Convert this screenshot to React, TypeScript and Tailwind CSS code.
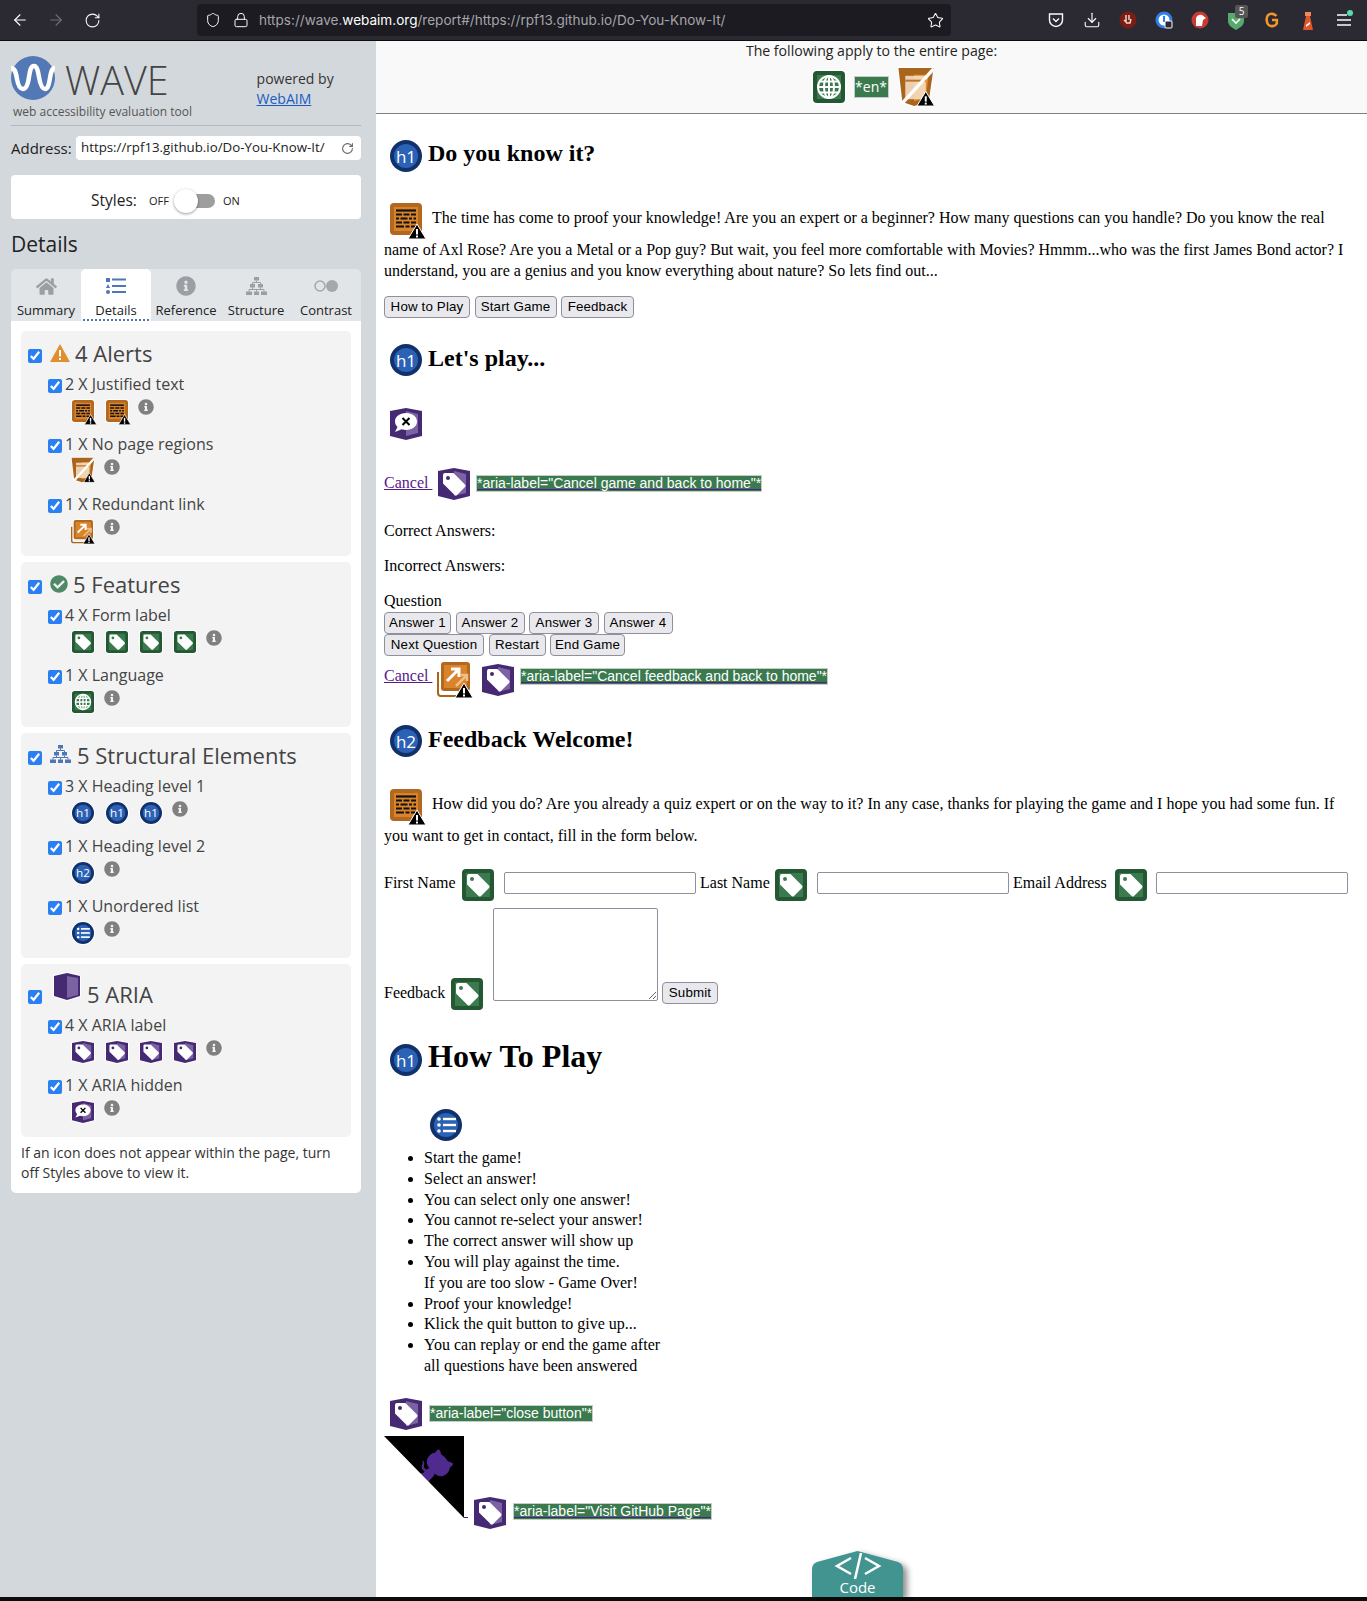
import React from "react";
import { ArrowLeft, ArrowRight, RotateCw, Shield, Lock, Star, Download } from "lucide-react";
import { FaHome, FaInfoCircle, FaCheckCircle } from "react-icons/fa";

type IconProps = { size?: number };

function WarnBadge() {
  return (
    <g>
      <polygon points="18,36 27,21 36,36" fill="#000" stroke="#fff" strokeWidth="1" />
      <rect x="26" y="26" width="2" height="5.500" fill="#fff" />
      <rect x="26" y="32.500" width="2" height="2" fill="#fff" />
    </g>
  );
}

function BrickIcon({ size = 32 }: IconProps) {
  return (
    <svg width={size} height={size} viewBox="0 0 32 32" className="overflow-visible shrink-0">
      <rect x="0" y="0" width="32" height="32" rx="4" fill="#b2681f" stroke="#fff" strokeWidth="3" paintOrder="stroke" />
      <rect x="4" y="4" width="24" height="24" fill="#d9832b" />
      <g stroke="#111" strokeWidth="2.200">
        <path d="M6 7.500H26" />
        <path d="M6 11.500H26" strokeDasharray="6 1.500" />
        <path d="M6 15.500H26" strokeDasharray="3 1.500 7 1.500" />
        <path d="M6 19.500H26" strokeDasharray="6 1.500" />
        <path d="M6 23.500H26" strokeDasharray="8 1.500 4 1.500" />
      </g>
      <WarnBadge />
    </svg>
  );
}

function RegionIcon({ size = 40 }: IconProps) {
  return (
    <svg width={size} height={size} viewBox="0 0 40 41" className="overflow-visible shrink-0">
      <polygon points="2,1 38,1 33,36 18,40 6,36" fill="#a9651c" stroke="#fff" strokeWidth="2.500" paintOrder="stroke" />
      <polygon points="18,8 33,8 30,32 18,35" fill="#e48e33" />
      <rect x="9" y="9" width="21" height="24" fill="#f3dcc0" opacity="0.9" />
      <rect x="9" y="13" width="21" height="2" fill="#b9752b" />
      <path d="M6 37L38 2" stroke="#fff" strokeWidth="3.500" />
      <g transform="translate(3 4)">
        <WarnBadge />
      </g>
    </svg>
  );
}

function LinkIcon({ size = 36 }: IconProps) {
  return (
    <svg width={size} height={size} viewBox="0 0 36 36" className="overflow-visible shrink-0">
      <path d="M1 10V31a3 3 0 0 0 3 3H26" fill="none" stroke="#a9651c" strokeWidth="2" />
      <rect x="4" y="0" width="29" height="29" rx="3" fill="#b2681f" stroke="#fff" strokeWidth="2" paintOrder="stroke" />
      <rect x="7" y="3" width="23" height="23" fill="#d9832b" />
      <path d="M10 19L21 8M14 7H22V15" fill="none" stroke="#fff" strokeWidth="3" />
      <path d="M19 24L29 14M24 13H30V19" fill="none" stroke="#f0bd86" strokeWidth="2.500" />
      <WarnBadge />
    </svg>
  );
}

function TagShape({ hole }: { hole: string }) {
  return (
    <g>
      <path d="M5 7q0-2 2-2h8.500l11.500 11.500q1.200 1.200 0 2.400l-8 8q-1.200 1.200-2.400 0L5 15.500Z" fill="#fff" />
      <circle cx="10" cy="10" r="2" fill={hole} />
    </g>
  );
}

function GreenTile({ children, size = 32 }: IconProps & { children: React.ReactNode }) {
  return (
    <svg width={size} height={size} viewBox="0 0 32 32" className="overflow-visible shrink-0">
      <rect x="0" y="0" width="32" height="32" rx="4" fill="#235832" stroke="#fff" strokeWidth="3" paintOrder="stroke" />
      <rect x="4" y="4" width="24" height="24" fill="#3a7a4e" />
      {children}
    </svg>
  );
}

function TagIcon({ size = 32 }: IconProps) {
  return (
    <GreenTile size={size}>
      <TagShape hole="#3a7a4e" />
    </GreenTile>
  );
}

function GlobeIcon({ size = 32 }: IconProps) {
  return (
    <GreenTile size={size}>
      <g fill="none" stroke="#fff" strokeWidth="2">
        <circle cx="16" cy="16" r="11" />
        <ellipse cx="16" cy="16" rx="5" ry="11" />
        <path d="M16 5V27M5 16H27M6.500 10.500H25.500M6.500 21.500H25.500" />
      </g>
    </GreenTile>
  );
}

function PurpleShield({ children, size = 32 }: IconProps & { children: React.ReactNode }) {
  return (
    <svg width={size} height={size} viewBox="0 0 32 32" className="overflow-visible shrink-0">
      <polygon points="0,3 16,0 32,3 32,28 16,32 0,28" fill="#452a73" stroke="#fff" strokeWidth="3" paintOrder="stroke" />
      <polygon points="16,3 28,6 28,25 16,28" fill="#7b62a3" />
      {children}
    </svg>
  );
}

function AriaTagIcon({ size = 32 }: IconProps) {
  return (
    <PurpleShield size={size}>
      <TagShape hole="#452a73" />
    </PurpleShield>
  );
}

function AriaHiddenIcon({ size = 32 }: IconProps) {
  return (
    <PurpleShield size={size}>
      <path d="M16 5c6.500 0 11 3.600 11 8.500S22.500 22 16 22c-1.600 0-3-.2-4.300-.7L5 24l2.500-5C6 17.600 5 15.700 5 13.500 5 8.600 9.500 5 16 5Z" fill="#fff" />
      <path d="M12.500 10l7 7M19.500 10l-7 7" stroke="#000" strokeWidth="2" />
    </PurpleShield>
  );
}

function HeadingIcon({ label, size = 32 }: IconProps & { label: string }) {
  return (
    <svg width={size} height={size} viewBox="0 0 32 32" className="overflow-visible shrink-0">
      <circle cx="16" cy="16" r="16" fill="#11316b" stroke="#fff" strokeWidth="3" paintOrder="stroke" />
      <circle cx="16" cy="16" r="12" fill="#2b62b6" />
      <text x="16" y="22.500" textAnchor="middle" fontSize="17" fill="#fff" fontFamily="'Open Sans', sans-serif">
        {label}
      </text>
    </svg>
  );
}

function ListIcon({ size = 32 }: IconProps) {
  return (
    <svg width={size} height={size} viewBox="0 0 32 32" className="overflow-visible shrink-0">
      <circle cx="16" cy="16" r="16" fill="#11316b" stroke="#fff" strokeWidth="3" paintOrder="stroke" />
      <circle cx="16" cy="16" r="12" fill="#2b62b6" />
      <g fill="#fff">
        <circle cx="9" cy="10" r="1.800" />
        <circle cx="9" cy="16" r="1.800" />
        <circle cx="9" cy="22" r="1.800" />
        <rect x="13" y="8.800" width="13" height="2.400" />
        <rect x="13" y="14.800" width="13" height="2.400" />
        <rect x="13" y="20.800" width="13" height="2.400" />
      </g>
    </svg>
  );
}

function WaveLogo() {
  return (
    <svg width="44" height="44" viewBox="0 0 44 44" className="shrink-0">
      <circle cx="22" cy="22" r="22" fill="#5279b6" />
      <path d="M0 12c4 0 5 5 6 11s3 10 6 10 5-5 6-12 2-11 5-11 4 5 5 11 3 12 6 12 4-5 5-11 2-10 5-10" fill="none" stroke="#fff" strokeWidth="4.500" />
    </svg>
  );
}

function AlertsIcon() {
  return (
    <svg width="20" height="18" viewBox="0 0 20 18" className="shrink-0">
      <polygon points="10,0 20,18 0,18" fill="#e08f2d" />
      <rect x="9" y="6" width="2" height="6.500" fill="#fff" />
      <rect x="9" y="14" width="2" height="2" fill="#fff" />
    </svg>
  );
}

function AriaBookIcon() {
  return (
    <svg width="28" height="28" viewBox="0 0 28 28" className="overflow-visible shrink-0">
      <polygon points="1,3 14,0 27,3 27,23 14,27 1,23" fill="#452a73" stroke="#fff" strokeWidth="2" paintOrder="stroke" />
      <polygon points="14,3 25,5 25,22 14,25" fill="#7b62a3" />
    </svg>
  );
}

function TreeIcon({ color }: { color: string }) {
  return (
    <svg width="21" height="18" viewBox="0 0 21 18" fill={color}>
      <rect x="8" y="0" width="5" height="3.500" />
      <rect x="4" y="7" width="5" height="3.500" />
      <rect x="12" y="7" width="5" height="3.500" />
      <rect x="0" y="14.500" width="6" height="3.500" />
      <rect x="8" y="14.500" width="5" height="3.500" />
      <rect x="15" y="14.500" width="6" height="3.500" />
      <path d="M10.500 3.500V5.500M6.500 5.500H14.500M6.500 5.500V7M14.500 5.500V7M3 12.500H18M3 12.500V14.500M10.500 12.500V14.500M18 12.500V14.500M6.500 10.500V12.500M14.500 10.500V12.500" stroke={color} strokeWidth="1" fill="none" />
    </svg>
  );
}

function DetailsTabIcon() {
  return (
    <svg width="20" height="18" viewBox="0 0 20 18" fill="#4f76b5">
      <rect x="0" y="1" width="4" height="4" />
      <polygon points="2,7 4,11 0,11" />
      <circle cx="2" cy="15" r="2" />
      <rect x="6" y="1.500" width="14" height="2" />
      <rect x="6" y="8" width="14" height="2" />
      <rect x="6" y="14" width="14" height="2" />
    </svg>
  );
}

function ContrastTabIcon() {
  return (
    <svg width="26" height="14" viewBox="0 0 26 14">
      <circle cx="7" cy="7" r="5" fill="none" stroke="#a4a8ac" strokeWidth="1.500" />
      <circle cx="19" cy="7" r="6" fill="#a4a8ac" />
    </svg>
  );
}

function Check({ className = "" }: { className?: string }) {
  return <input type="checkbox" defaultChecked className={`w-[14px] h-[14px] m-0 shrink-0 accent-[#2a7ff3] ${className}`} />;
}

function Info() {
  return <FaInfoCircle size={16} className="text-[#808080] -ml-[2px] -mt-[1px] shrink-0" />;
}

function DetailRow({ title, icons }: { title: string; icons: React.ReactNode }) {
  return (
    <div className="h-[60px] pl-[27px]">
      <div className="flex items-center h-[14px]">
        <Check />
        <span className="ml-[3px] text-[16px] leading-[14px] -mt-[4px] text-[#444]">{title}</span>
      </div>
      <div className="flex items-start gap-[12px] pl-[24px] mt-[7px]">
        {icons}
        <Info />
      </div>
    </div>
  );
}

function DetailSection({ icon, title, tall, children }: { icon: React.ReactNode; title: string; tall?: boolean; children: React.ReactNode }) {
  return (
    <div className={`bg-[#f3f3f3] rounded-[5px] ${tall ? "pt-[26px]" : "pt-[18px]"}`}>
      <div className="flex items-start pl-[7px] h-[30px]">
        <Check />
        {icon}
        <span className="text-[22px] leading-[30px] -mt-[11px] text-[#444] whitespace-nowrap">{title}</span>
      </div>
      <div className="-mb-[3px]">{children}</div>
    </div>
  );
}

function Tab({ icon, label, active }: { icon: React.ReactNode; label: string; active?: boolean }) {
  return (
    <div className={`h-[52px] flex flex-col items-center rounded-t-[5px] ${active ? "bg-white" : ""}`}>
      <div className="h-[18px] mt-[8px] flex items-center">{icon}</div>
      <span className={`mt-[6px] text-[13px] leading-[18px] text-[#222] text-center self-stretch mx-[2px] ${active ? "border-b-2 border-dotted border-[#4f76b5]" : ""}`}>
        {label}
      </span>
    </div>
  );
}

function Sidebar() {
  return (
    <aside className="w-[376px] shrink-0 bg-[#d3d8dc] font-['Open_Sans',sans-serif] pl-[11px] pr-[15px] text-[#222]">
      <div className="flex mt-[15px] h-[44px]">
        <WaveLogo />
        <span className="ml-[10px] mt-[2px] text-[39.500px] leading-[44px] font-light text-[#444]">WAVE</span>
        <div className="ml-[88px] mt-[13px] text-[14px] leading-[20px] text-[#333]">
          <div>powered by</div>
          <a className="text-[#1a5bc4] underline">WebAIM</a>
        </div>
      </div>
      <div className="mt-[3px] ml-[2px] text-[12px] leading-[18px] text-[#555]">web accessibility evaluation tool</div>
      <div className="mt-[4px] h-px bg-[#b4b8bc]" />
      <div className="flex items-center mt-[10px] h-[24px]">
        <span className="text-[15px] w-[65px]">Address:</span>
        <div className="flex-1 h-[24px] bg-white rounded-[4px] flex items-center justify-between pl-[5px] pr-[7px]">
          <span className="text-[13.300px] text-[#222] whitespace-nowrap">https://rpf13.github.io/Do-You-Know-It/</span>
          <RotateCw size={13} className="text-[#666]" />
        </div>
      </div>
      <div className="mt-[15px] h-[44px] bg-white rounded-[4px] flex items-center pl-[80px] pt-[8px]">
        <span className="text-[15.500px] w-[58px]">Styles:</span>
        <span className="text-[11px] w-[26px]">OFF</span>
        <div className="w-[40px] h-[14px] rounded-full bg-[#9e9e9e] relative">
          <div className="absolute -left-[1px] -top-[5px] w-[24px] h-[24px] rounded-full bg-white shadow-[0_1px_3px_rgba(0,0,0,0.4)]" />
        </div>
        <span className="text-[11px] ml-[8px]">ON</span>
      </div>
      <div className="mt-[11px] text-[21px] leading-[28px] text-[#222]">Details</div>
      <div className="mt-[11px] grid grid-cols-5 bg-[#e2e5e8] rounded-t-[5px]">
        <Tab icon={<FaHome size={21} className="text-[#9b9fa3]" />} label="Summary" />
        <Tab icon={<DetailsTabIcon />} label="Details" active />
        <Tab icon={<FaInfoCircle size={20} className="text-[#9b9fa3]" />} label="Reference" />
        <Tab icon={<TreeIcon color="#9b9fa3" />} label="Structure" />
        <Tab icon={<ContrastTabIcon />} label="Contrast" />
      </div>
      <div className="bg-white rounded-b-[5px] px-[10px] pt-[10px] pb-[10px] flex flex-col gap-[6px]">
        <DetailSection icon={<span className="ml-[8px] -mt-[5px] mr-[5px]"><AlertsIcon /></span>} title="4 Alerts">
          <DetailRow title="2 X Justified text" icons={<><BrickIcon size={22} /><BrickIcon size={22} /></>} />
          <DetailRow title="1 X No page regions" icons={<span className="-ml-[2px] -mr-[2px] -mt-[3px]"><RegionIcon size={26} /></span>} />
          <DetailRow title="1 X Redundant link" icons={<span className="-ml-[1px] -mr-[1px]"><LinkIcon size={24} /></span>} />
        </DetailSection>
        <DetailSection icon={<span className="ml-[8px] -mt-[5px] mr-[5px]"><FaCheckCircle size={18} className="text-[#4f8a68]" /></span>} title="5 Features">
          <DetailRow title="4 X Form label" icons={<><TagIcon size={22} /><TagIcon size={22} /><TagIcon size={22} /><TagIcon size={22} /></>} />
          <DetailRow title="1 X Language" icons={<GlobeIcon size={22} />} />
        </DetailSection>
        <DetailSection icon={<span className="ml-[8px] -mt-[6px] mr-[6px]"><TreeIcon color="#4f76b5" /></span>} title="5 Structural Elements">
          <DetailRow title="3 X Heading level 1" icons={<><HeadingIcon label="h1" size={22} /><HeadingIcon label="h1" size={22} /><HeadingIcon label="h1" size={22} /></>} />
          <DetailRow title="1 X Heading level 2" icons={<HeadingIcon label="h2" size={22} />} />
          <DetailRow title="1 X Unordered list" icons={<ListIcon size={22} />} />
        </DetailSection>
        <DetailSection tall icon={<span className="ml-[11px] -mt-[17px] mr-[6px]"><AriaBookIcon /></span>} title="5 ARIA">
          <DetailRow title="4 X ARIA label" icons={<><AriaTagIcon size={22} /><AriaTagIcon size={22} /><AriaTagIcon size={22} /><AriaTagIcon size={22} /></>} />
          <DetailRow title="1 X ARIA hidden" icons={<AriaHiddenIcon size={22} />} />
        </DetailSection>
        <p className="text-[14px] leading-[20px] text-[#333]">
          If an icon does not appear within the page, turn off Styles above to view it.
        </p>
      </div>
    </aside>
  );
}

function AriaText({ children, link }: { children: React.ReactNode; link?: boolean }) {
  return (
    <span className={`inline-block bg-[#3a7a4e] border border-[#c4cdc6] text-white text-[14px] leading-[15px] h-[17px] font-['Liberation_Sans',sans-serif] whitespace-nowrap ${link ? "underline decoration-[#551a8b]" : ""}`}>
      {children}
    </span>
  );
}

function Btn({ children, width }: { children: React.ReactNode; width: string }) {
  return (
    <button className={`h-[22px] bg-[#e9e9ed] border border-[#8f8f9d] rounded-[4px] text-[13.330px] tracking-[0.15px] leading-[18px] text-black font-['Liberation_Sans',sans-serif] whitespace-nowrap shrink-0 ${width}`}>
      {children}
    </button>
  );
}

function HeadingRow({ label, text, big, low, className = "" }: { label: string; text: string; big?: boolean; low?: boolean; className?: string }) {
  return (
    <div className={`flex items-start pl-[6px] gap-[6px] h-[32px] ${className}`}>
      <HeadingIcon label={label} />
      <span className={`font-bold whitespace-nowrap ${low ? "leading-[28px]" : big ? "leading-[24px]" : "leading-[26px]"} ${big ? "text-[32px]" : "text-[24px]"}`}>{text}</span>
    </div>
  );
}

function Field() {
  return <input className="block h-[22px] mt-[3px] w-[192px] bg-white border border-[#8f8f9d] rounded-[2px]" />;
}

function GithubCorner() {
  return (
    <svg width="80" height="82" viewBox="0 0 250 250" preserveAspectRatio="none" className="shrink-0 mb-[11px]">
      <path d="M0,0 L115,115 L130,115 L142,142 L250,250 L250,0 Z" fill="#000" />
      <path d="M128.3,109 C113.800,99.700 119,89.600 119,89.600 C122,82.700 120.500,78.600 120.500,78.600 C119.200,72 123.400,76.300 123.400,76.300 C127.300,80.900 125.500,87.300 125.500,87.300 C122.900,97.600 130.600,101.900 134.400,103.200" fill="#4f2a8f" />
      <path d="M115,115 C114.900,115.100 118.700,116.500 119.800,115.400 L133.700,101.600 C136.900,99.200 139.900,98.400 142.200,98.600 C133.800,88 127.500,74.400 143.800,58 C148.500,53.400 154,51.200 159.700,51 C160.300,49.400 163.200,43.600 171.400,40.100 C171.400,40.100 176.100,42.500 178.800,56.200 C183.100,58.600 187.200,61.800 190.900,65.400 C194.500,69 197.700,73.200 200.100,77.600 C213.800,80.200 216.300,84.900 216.300,84.900 C212.700,93.100 206.900,96 205.400,96.600 C205.100,102.400 203,107.800 198.300,112.500 C181.900,128.900 168.300,122.500 157.700,114.100 C157.900,116.900 156.700,120.900 152.700,124.900 L141,136.500 C139.800,137.700 141.600,141.900 141.800,141.800 Z" fill="#4f2a8f" />
    </svg>
  );
}

function MainContent() {
  return (
    <main className="flex-1 relative font-['Liberation_Serif',serif] text-[16px] text-black bg-white">
      <div className="h-[73px] bg-[#f9f9f9] border-b border-[#808080] font-['Open_Sans',sans-serif]">
        <div className="text-center text-[14.100px] leading-[20px] text-[#222]">The following apply to the entire page:</div>
        <div className="flex justify-center items-center gap-[9px] mt-[5px] ml-[5px] h-[41px]">
          <GlobeIcon size={32} />
          <span className="inline-flex items-center justify-center h-[22px] w-[35px] bg-[#3a7a4e] border border-[#c4cdc6] text-white text-[14px]">*en*</span>
          <span className="-ml-[2px]"><RegionIcon size={40} /></span>
        </div>
      </div>

      <div className="px-[8px]">
        <HeadingRow label="h1" text="Do you know it?" className="mt-[26px]" />
        <p className="mt-[31px] leading-[21px]">
          <span className="inline-block ml-[6px] mr-[10px] mb-[4px] align-[-16px]"><BrickIcon /></span>
          The time has come to proof your knowledge! Are you an expert or a beginner? How many questions can you handle? Do you know the real name of Axl Rose? Are you a Metal or a Pop guy? But wait, you feel more comfortable with Movies? Hmmm...who was the first James Bond actor? I understand, you are a genius and you know everything about nature? So lets find out...
        </p>
        <div className="flex gap-[4.500px] mt-[15px]">
          <Btn width="w-[86px]">How to Play</Btn>
          <Btn width="w-[82px]">Start Game</Btn>
          <Btn width="w-[73px]">Feedback</Btn>
        </div>
        <HeadingRow label="h1" text="Let's play..." low className="mt-[26px]" />
        <div className="mt-[32px] pl-[6px]"><AriaHiddenIcon /></div>
        <div className="mt-[28px] flex items-center h-[32px]">
          <a className="text-[#551a8b] underline whitespace-pre w-[44px] -mt-[3px]">Cancel </a>
          <span className="ml-[10px]"><AriaTagIcon /></span>
          <span className="ml-[6px] -mt-[2px]"><AriaText link>*aria-label="Cancel game and back to home"*</AriaText></span>
        </div>
        <div className="mt-[20px] leading-[21px]">Correct Answers:</div>
        <div className="mt-[14px] leading-[21px]">Incorrect Answers:</div>
        <div className="mt-[14px] leading-[21px]">Question</div>
        <div className="flex gap-[4.500px] mt-[1px]">
          <Btn width="w-[67px]">Answer 1</Btn>
          <Btn width="w-[69px]">Answer 2</Btn>
          <Btn width="w-[70px]">Answer 3</Btn>
          <Btn width="w-[69px]">Answer 4</Btn>
        </div>
        <div className="flex gap-[4.500px]">
          <Btn width="w-[100px]">Next Question</Btn>
          <Btn width="w-[57px]">Restart</Btn>
          <Btn width="w-[75px]">End Game</Btn>
        </div>
        <div className="mt-[6px] flex items-center h-[35px]">
          <a className="text-[#551a8b] underline whitespace-pre w-[44px] -mt-[8px]">Cancel </a>
          <span className="ml-[9px]"><LinkIcon /></span>
          <span className="ml-[9px]"><AriaTagIcon /></span>
          <span className="ml-[6px] -mt-[8px]"><AriaText link>*aria-label="Cancel feedback and back to home"*</AriaText></span>
        </div>
        <HeadingRow label="h2" text="Feedback Welcome!" low className="mt-[28px]" />
        <p className="mt-[32px] leading-[21px]">
          <span className="inline-block ml-[6px] mr-[10px] mb-[4px] align-[-16px]"><BrickIcon /></span>
          How did you do? Are you already a quiz expert or on the way to it? In any case, thanks for playing the game and I hope you had some fun. If you want to get in contact, fill in the form below.
        </p>
        <div className="mt-[23px] flex items-start h-[32px]">
          <span className="mt-[3px] leading-[21px] w-[71px] whitespace-nowrap shrink-0">First Name</span>
          <span className="ml-[7px]"><TagIcon /></span>
          <span className="ml-[10px]"><Field /></span>
          <span className="ml-[4px] mt-[3px] leading-[21px] w-[69px] whitespace-nowrap shrink-0">Last Name</span>
          <span className="ml-[6px]"><TagIcon /></span>
          <span className="ml-[10px]"><Field /></span>
          <span className="ml-[4px] mt-[3px] leading-[21px] w-[95px] whitespace-nowrap shrink-0">Email Address</span>
          <span className="ml-[7px]"><TagIcon /></span>
          <span className="ml-[9px]"><Field /></span>
        </div>
        <div className="mt-[7px] flex items-end h-[102px]">
          <span className="mb-[7px] leading-[21px] w-[61px]">Feedback</span>
          <span className="ml-[6px] h-[32px]"><TagIcon /></span>
          <textarea className="ml-[10px] mb-[9px] w-[165px] h-[93px] bg-white border border-[#8f8f9d] rounded-[2px] resize" />
          <span className="ml-[4px] mb-[6px]"><Btn width="w-[56px]">Submit</Btn></span>
        </div>
        <HeadingRow label="h1" text="How To Play" big className="mt-[34px]" />
        <div className="mt-[33px] ml-[46px]"><ListIcon /></div>
        <ul className="mt-[7px] pl-[40px] list-disc leading-[20.800px]">
          <li>Start the game!</li>
          <li>Select an answer!</li>
          <li>You can select only one answer!</li>
          <li>You cannot re-select your answer!</li>
          <li>The correct answer will show up</li>
          <li>You will play against the time.<br />If you are too slow - Game Over!</li>
          <li>Proof your knowledge!</li>
          <li>Klick the quit button to give up...</li>
          <li>You can replay or end the game after<br />all questions have been answered</li>
        </ul>
        <div className="mt-[21px] flex items-center pl-[6px] h-[32px]">
          <AriaTagIcon />
          <span className="ml-[7px] -mt-[1px]"><AriaText>*aria-label="close button"*</AriaText></span>
        </div>
        <div className="mt-[6px] flex items-end">
          <GithubCorner />
          <span className="w-[4px] h-px bg-[#551a8b] mb-[11px] shrink-0" />
          <span className="ml-[6px]"><AriaTagIcon /></span>
          <span className="ml-[7px] mb-[9px] flex"><AriaText link>*aria-label="Visit GitHub Page"*</AriaText></span>
        </div>
      </div>

      <div className="absolute left-[436px] top-[1510px] w-[91px] h-[46px] font-['Open_Sans',sans-serif] text-white flex flex-col items-center">
        <svg width="91" height="46" viewBox="0 0 91 46" className="absolute inset-0 overflow-visible drop-shadow-[4px_3px_3px_rgba(0,0,0,0.45)]">
          <path d="M0 46V18q0-5 5-7L45.500 0 86 11q5 2 5 7V46Z" fill="#429490" />
        </svg>
        <svg width="48" height="26" viewBox="0 0 48 26" fill="none" stroke="#fff" strokeWidth="2.500" className="relative mt-[2px]">
          <path d="M17 5L3 13L17 21M27 0L21 26M31 5L45 13L31 21" />
        </svg>
        <div className="relative text-[15px] leading-[16px]">Code</div>
      </div>
    </main>
  );
}

function ExtDot({ color, children }: { color: string; children?: React.ReactNode }) {
  return (
    <svg width="18" height="18" viewBox="0 0 18 18">
      <circle cx="9" cy="9" r="8.500" fill={color} />
      {children}
    </svg>
  );
}

function BrowserBar() {
  const iconClass = "w-[36px] flex justify-center";
  return (
    <header className="h-[41px] shrink-0 bg-[#2b2a33] border-b border-[#0c0c0d] flex items-center pl-[2px] text-[#fbfbfe]">
      <span className={iconClass}><ArrowLeft size={18} strokeWidth={1.500} /></span>
      <span className={iconClass}><ArrowRight size={18} strokeWidth={1.500} className="text-[#6f6e75]" /></span>
      <span className={iconClass}><RotateCw size={17} strokeWidth={1.500} /></span>
      <div className="ml-[87px] w-[754px] h-[32px] rounded-[4px] bg-[#1c1b22] flex items-center pl-[8px] pr-[7px]">
        <Shield size={16} strokeWidth={1.500} />
        <Lock size={16} strokeWidth={1.500} className="ml-[12px]" />
        <span className="ml-[10px] text-[13.550px] text-[#a4a4a9] font-['Inter',sans-serif] whitespace-nowrap flex-1">
          https://wave.<span className="text-white">webaim.org</span>/report#/https://rpf13.github.io/Do-You-Know-It/
        </span>
        <Star size={17} strokeWidth={1.500} />
      </div>
      <div className="ml-[87px] flex items-center">
        <span className={iconClass}>
          <svg width="16" height="16" viewBox="0 0 16 16" fill="none" stroke="#fbfbfe" strokeWidth="1.400">
            <path d="M1.500 2h13v6a6.500 6.500 0 0 1-13 0Z" />
            <path d="M5 6.500l3 3 3-3" />
          </svg>
        </span>
        <span className={iconClass}><Download size={18} strokeWidth={1.500} /></span>
        <span className={iconClass}>
          <ExtDot color="#7c1d14"><path d="M7 4v7l-2-2M10 4v5M7 12h4l1-4" stroke="#e8d8c8" strokeWidth="1.500" fill="none" /></ExtDot>
        </span>
        <span className={iconClass}>
          <ExtDot color="#2f7fe6"><circle cx="9" cy="9" r="5.500" fill="#fff" /><rect x="8" y="5" width="2" height="6" fill="#2f7fe6" /><rect x="10" y="10" width="7" height="7" rx="1" fill="#2b2a33" stroke="#fff" /></ExtDot>
        </span>
        <span className={iconClass}>
          <ExtDot color="#c93a32"><path d="M5 15V8c0-3 3-5 6-4l4 3-3 2-1 6Z" fill="#fff" /></ExtDot>
        </span>
        <span className={`${iconClass} relative`}>
          <svg width="16" height="19" viewBox="0 0 16 19">
            <path d="M0 2h16v8c0 5-5 7-8 9-3-2-8-4-8-9Z" fill="#58a96c" />
            <path d="M4 8l4 4 4-4" fill="none" stroke="#fff" strokeWidth="1.600" />
          </svg>
          <span className="absolute left-[17px] -top-[6px] w-[13px] h-[13px] bg-[#555] rounded-[2px] text-[10px] leading-[13px] text-center text-white font-['Open_Sans',sans-serif]">5</span>
        </span>
        <span className={iconClass}>
          <svg width="14" height="16" viewBox="0 0 16 18" fill="none" stroke="#f0962c" strokeWidth="3">
            <path d="M13 4.500C11 1.500 6 1 3.500 3.500S1.500 13 4.500 15 12 16 13.500 13V9H8" />
          </svg>
        </span>
        <span className={iconClass}>
          <svg width="14" height="20" viewBox="0 0 14 20">
            <path d="M5 6h4l3 14H2Z" fill="#e2552c" />
            <rect x="4" y="2" width="6" height="4" fill="#f08a5d" />
            <path d="M5 15l4-3v2l-4 3Z" fill="#fff" />
          </svg>
        </span>
        <span className={`${iconClass} relative`}>
          <svg width="16" height="14" viewBox="0 0 16 14" stroke="#fbfbfe" strokeWidth="1.500">
            <path d="M1 2H11M1 7H15M1 12H15" />
          </svg>
          <span className="absolute left-[21px] top-[-3px] w-[6px] h-[6px] rounded-full bg-[#54e0ae]" />
        </span>
      </div>
    </header>
  );
}

export default function App() {
  return (
    <div className="w-[1367px] h-[1601px] flex flex-col overflow-hidden bg-white">
      <BrowserBar />
      <div className="flex flex-1 min-h-0">
        <Sidebar />
        <MainContent />
      </div>
      <div className="h-[4px] shrink-0 bg-[#0c0c0d]" />
    </div>
  );
}
